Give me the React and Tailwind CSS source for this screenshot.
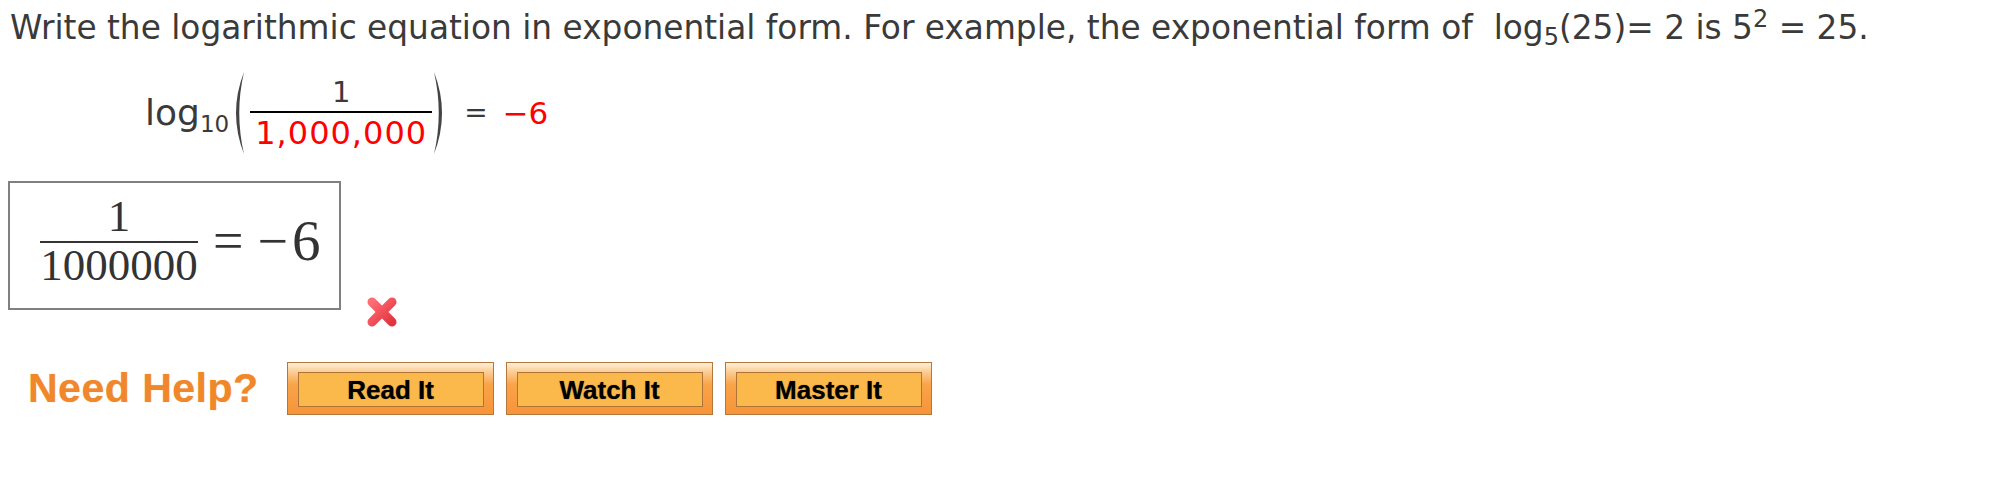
import React from "react";

function Paren({ flip }) {
  return (
    <svg width="14" height="84" viewBox="0 0 14 84" className={flip ? "-scale-x-100" : ""}>
      <path d="M13 1 Q-3 42 13 83 Q3.5 42 13 1 Z" fill="#444" />
    </svg>
  );
}

function HelpButton({ label }) {
  return (
    <div className="w-[207px] h-[53px] border border-[#b4783c] bg-[linear-gradient(to_bottom,#fff0dc_0%,#fcd3a0_14%,#f9a448_42%,#f7943a_100%)] pt-[9px] pl-[10px] pr-[9px] pb-[7px] flex">
      <div className="flex-1 border border-[#b07536] bg-[#fbb94c] flex items-center justify-center">
        <span className="font-['Liberation_Sans',Arial,sans-serif] font-bold text-[26px] leading-none text-black [text-shadow:0_0_1px_rgba(0,0,0,0.6)]">
          {label}
        </span>
      </div>
    </div>
  );
}

export default function App() {
  return (
    <div className="w-[1994px] h-[480px] bg-white overflow-hidden">
      {/* Question text */}
      <div className="pl-[10px] pt-[10px] h-[46px] text-[32.8px] leading-[36px] text-[#3a3a3a] whitespace-nowrap font-['DejaVu_Sans',Verdana,sans-serif]">
        Write the logarithmic equation in exponential form. For example, the exponential form of&nbsp; log
        <sub className="text-[24px]">5</sub>(25)= 2 is 5<sup className="text-[24px]">2</sup> = 25.
      </div>

      {/* Given logarithmic equation */}
      <div className="mt-[24px] h-[86px] pl-[145px] flex items-center font-['DejaVu_Sans',Verdana,sans-serif] text-[#3a3a3a]">
        <span className="text-[36px] leading-[36px] whitespace-nowrap">
          log<sub className="text-[23px] bottom-[-7px]">10</sub>
        </span>
        <div className="ml-[2px]">
          <Paren />
        </div>
        <div className="ml-[5px] w-[182px] flex flex-col items-center">
          <span className="text-[29px] leading-[29px] pb-[4px]">1</span>
          <div className="w-full h-[2px] bg-black" />
          <span className="mt-[4px] text-[32px] leading-[32px] tracking-[1px] text-[#ff0000]">1,000,000</span>
        </div>
        <div className="ml-[1px]">
          <Paren flip />
        </div>
        <span className="ml-[17px] text-[28px] leading-[28px]">=</span>
        <span className="ml-[15px] text-[31px] leading-[31px] text-[#ff0000]">−6</span>
      </div>

      {/* Answer box */}
      <div className="mt-[25px] flex items-start">
        <div className="ml-[8px] w-[333px] h-[129px] border-2 border-[#808080] flex items-center pl-[30px] pb-[10px] font-['Liberation_Serif','Times_New_Roman',serif] text-[#333]">
          <div className="flex flex-col items-center w-[158px]">
            <span className="text-[45px] leading-[45px]">1</span>
            <div className="mt-[2px] w-full h-[2px] bg-[#333]" />
            <span className="text-[45px] leading-[45px]">1000000</span>
          </div>
          <span className="ml-[15px] text-[54px] leading-[54px]">=</span>
          <span className="ml-[14px] text-[54px] leading-[54px]">−</span>
          <span className="ml-[4px] text-[57px] leading-[54px]">6</span>
        </div>
        <svg className="ml-[24px] mt-[114px]" width="34" height="34" viewBox="0 0 34 34">
          <defs>
            <linearGradient id="xg" x1="0" y1="0" x2="1" y2="1">
              <stop offset="0" stopColor="#ff6d74" />
              <stop offset="1" stopColor="#e2343f" />
            </linearGradient>
          </defs>
          <g stroke="url(#xg)" strokeWidth="9" strokeLinecap="round">
            <line x1="7" y1="7" x2="27" y2="27" />
            <line x1="27" y1="7" x2="7" y2="27" />
          </g>
        </svg>
      </div>

      {/* Need help */}
      <div className="mt-[33px] pl-[28px] flex items-center">
        <span className="font-['Liberation_Sans',Arial,sans-serif] font-bold text-[41px] leading-none tracking-[0.5px] text-[#f0872a] [text-shadow:0_0_1px_rgba(240,135,42,0.6)]">
          Need Help?
        </span>
        <div className="ml-[28px] flex gap-[12px]">
          <HelpButton label="Read It" />
          <HelpButton label="Watch It" />
          <HelpButton label="Master It" />
        </div>
      </div>
    </div>
  );
}
